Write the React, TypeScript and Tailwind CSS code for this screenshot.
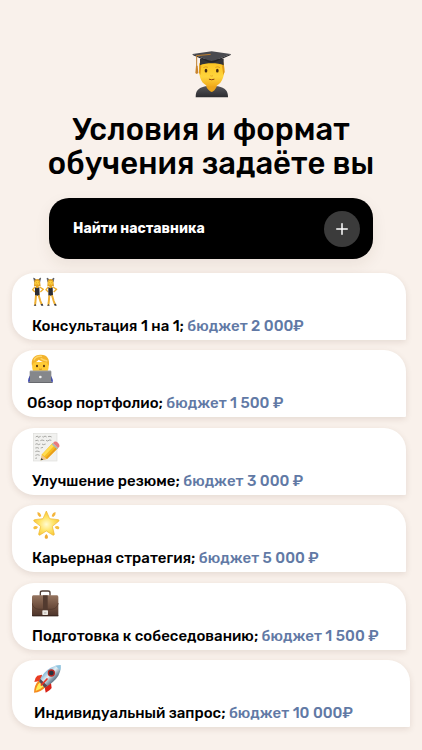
import React from "react";
import { Plus } from "lucide-react";
import clsx from "clsx";

function GraduateIcon() {
  return (
    <svg viewBox="30 32 126 144" className="h-12 w-[42px]" aria-hidden="true">
      <defs>
        <linearGradient id="grad-face" x1="0" y1="0" x2="0" y2="1">
          <stop offset="0" stopColor="#fbc21f" />
          <stop offset="0.6" stopColor="#ffd53d" />
          <stop offset="1" stopColor="#f0a818" />
        </linearGradient>
        <linearGradient id="grad-gown" x1="0" y1="0" x2="0" y2="1">
          <stop offset="0" stopColor="#55555a" />
          <stop offset="1" stopColor="#2c2c30" />
        </linearGradient>
      </defs>
      <path d="M47 174 C47 154 54 147 76 141 H114 C136 147 144 154 144 174 Z" fill="url(#grad-gown)" />
      <path d="M79 128 H110 V142 C106 151 99 157 95 158 C89 156 82 149 79 142 Z" fill="#eba51c" />
      <path d="M60 68 C54 94 58 124 73 134 C86 145 104 145 117 134 C131 124 137 94 130 68 Z" fill="url(#grad-face)" />
      <path d="M58 70 L57 100 L61 107 L64 80 Z M131 70 L134 98 L130 107 L126 80 Z" fill="#e09a17" />
      <path d="M60 58 H131 V78 C112 70 79 70 60 78 Z" fill="#333337" />
      <path d="M38 44 L95 36 L152 44 L106 63 C98 66 91 66 84 63 Z" fill="#4a4a4f" />
      <path d="M38 44 L84 63 C91 66 98 66 106 63 L152 44 V47 L106 67 C98 70 91 70 84 67 L38 47 Z" fill="#242428" />
      <path d="M92 45 L50 49 V83" fill="none" stroke="#bd7e2e" strokeWidth="3" />
      <path d="M48 79 H53 L55 101 L50 104 L46 101 Z" fill="#c8842e" />
      <ellipse cx="78" cy="94" rx="4" ry="5.5" fill="#482c12" />
      <ellipse cx="112" cy="94" rx="4" ry="5.5" fill="#482c12" />
      <path d="M70 85 Q77 80 84 84 M106 84 Q113 80 120 85" fill="none" stroke="#d18c18" strokeWidth="2" />
      <path d="M91 109 Q95 112 99 109" fill="none" stroke="#dd981c" strokeWidth="2" />
      <path d="M88 120 Q95 123 102 120" fill="none" stroke="#8b3f0c" strokeWidth="3" strokeLinecap="round" />
    </svg>
  );
}

function Dancer() {
  return (
    <g>
      <path d="M32 22 L29 9 L36 14 M43 14 L50 9 L47 22" fill="#55565e" stroke="#494a52" strokeWidth="2" />
      <path d="M31 19 C31 10 48 10 48 19 L50 34 H30 Z" fill="#e0a024" />
      <circle cx="39.500" cy="24" r="7" fill="#ffd03b" />
      <path d="M33 36 L26 44 L33 51 M47 36 L58 43 L49 51" fill="none" stroke="#f0b02c" strokeWidth="4" strokeLinejoin="round" />
      <path d="M36 30 H44 V39 H36 Z" fill="#e9a824" />
      <path d="M33 37 L39 40 L46 37 L47 62 H33 Z" fill="#2c2c31" />
      <path d="M36 61 L34 84 L33 91 M44 61 L49 78 L53 88" fill="none" stroke="#efb032" strokeWidth="6" />
      <path d="M29 92 L34 87 L37 92 Z M50 88 L56 86 L58 92 H52 Z" fill="#39393f" />
      <path d="M36 23 H37 M42 23 H43" stroke="#69400d" strokeWidth="2" />
      <path d="M37 28 H42" stroke="#b35b17" strokeWidth="1" />
    </g>
  );
}

function DancersIcon() {
  return (
    <svg viewBox="24 6 90 90" className="size-[30px]" aria-hidden="true">
      <Dancer />
      <g transform="translate(40 0)">
        <Dancer />
      </g>
    </svg>
  );
}

function LaptopIcon() {
  return (
    <svg viewBox="21 6 90 90" className="size-[30px]" aria-hidden="true">
      <path d="M24 89 C25 75 30 66 41 62 H82 C93 67 98 77 99 89 Z" fill="#2936ae" />
      <path d="M37 30 C34 57 42 70 61 71 C80 70 88 57 86 30 Z" fill="#ffcb35" />
      <path d="M36 42 C32 20 43 8 61 8 C81 7 91 21 86 42 C83 37 81 34 80 31 C71 31 62 28 56 23 C52 29 44 31 41 32 Z" fill="#f2b32c" />
      <path d="M42 25 C45 15 56 12 66 13 M62 19 C69 24 76 26 82 27" fill="none" stroke="#ffd566" strokeWidth="4" />
      <ellipse cx="51" cy="42" rx="3" ry="4" fill="#54340f" />
      <ellipse cx="72" cy="42" rx="3" ry="4" fill="#54340f" />
      <path d="M57 51 Q61 53 66 51" fill="none" stroke="#b8701a" strokeWidth="2" />
      <rect x="29" y="56" width="65" height="36" rx="3" fill="#85878b" />
      <path d="M30 57 H93" stroke="#a9abad" strokeWidth="2" />
      <path d="M25 90 H98 V93 H25 Z" fill="#67696e" />
      <circle cx="61" cy="75" r="4" fill="#f0f1f2" />
    </svg>
  );
}

function NoteIcon() {
  return (
    <svg viewBox="24 6 90 90" className="size-[30px]" aria-hidden="true">
      <rect x="28" y="10" width="71" height="83" fill="#f1f1ef" stroke="#dededb" strokeWidth="2" />
      <g fill="none" stroke="#83837f" strokeWidth="2">
        <path d="M35 21 l5 -3 l3 4 l7 -3 M55 20 l4 1 l4 -3 l5 3 M72 20 l6 -1 l5 2" />
        <path d="M34 32 l7 -1 l3 2 M49 32 l5 -2 l7 2 M66 31 l4 2 l7 -3 l5 1" />
        <path d="M34 43 l5 -2 l4 3 l6 -2 M54 42 l4 2 l7 -2" />
        <path d="M34 54 l6 -1 l5 2 M50 54 l7 -2 M34 65 l5 -2 l8 2 M34 76 l7 -2 l6 2 M34 85 l5 -1" />
      </g>
      <path d="M50 91 L54 73 L86 39 L102 54 L69 87 Z" fill="#f7bd20" />
      <path d="M55 73 L86 40 L92 46 L61 79 Z" fill="#ffdd52" />
      <path d="M65 84 L97 50 L102 54 L69 87 Z" fill="#e89d1a" />
      <path d="M50 91 L54 75 L68 87 Z" fill="#edc591" />
      <path d="M50 91 L52 84 L58 89 Z" fill="#45403a" />
      <path d="M83 43 L87 39 L103 54 L99 58 Z" fill="#a9b8bd" />
      <path d="M87 39 L91 35 C98 32 108 42 106 49 L103 54 Z" fill="#e9797c" />
    </svg>
  );
}

function StarIcon() {
  return (
    <svg viewBox="24 3 90 90" className="size-[30px]" aria-hidden="true">
      <defs>
        <radialGradient id="star-fill" cx="0.500" cy="0.550" r="0.550">
          <stop offset="0" stopColor="#fffbd2" />
          <stop offset="0.5" stopColor="#ffe56a" />
          <stop offset="1" stopColor="#f8c332" />
        </radialGradient>
      </defs>
      <path d="M67 9 L77 32 L103 35 Q107 36 104 40 L85 55 L91 79 Q90 83 86 81 L67 69 L48 81 Q44 83 44 78 L50 55 L30 40 Q27 36 32 35 L57 32 Z" fill="url(#star-fill)" stroke="#efb52b" strokeWidth="2" strokeLinejoin="round" />
      <path d="M40 13 Q49 12 52 25 L47 27 Q39 22 40 13 Z M95 13 Q86 12 83 25 L88 27 Q96 22 95 13 Z" fill="#f4b53b" />
      <path d="M67 78 Q74 85 71 91 Q67 94 63 91 Q60 85 67 78 Z" fill="#efab34" />
      <path d="M28 58 Q34 50 42 57 Q38 66 29 63 Z M106 58 Q100 50 92 57 Q96 66 105 63 Z" fill="#f5bd3e" />
    </svg>
  );
}

function BriefcaseIcon() {
  return (
    <svg viewBox="24 6 90 90" className="size-[30px]" aria-hidden="true">
      <defs>
        <linearGradient id="case-fill" x1="0" y1="0" x2="0" y2="1">
          <stop offset="0" stopColor="#95745f" />
          <stop offset="0.5" stopColor="#70503f" />
          <stop offset="1" stopColor="#4b332a" />
        </linearGradient>
      </defs>
      <path d="M49 32 V23 Q49 18 55 18 H72 Q78 18 78 23 V32" fill="none" stroke="#513f37" strokeWidth="4" />
      <path d="M28 31 H99 Q103 31 103 36 V92 Q103 94 100 94 H27 Q24 94 24 91 V36 Q24 31 28 31 Z" fill="url(#case-fill)" />
      <path d="M24 54 Q27 71 44 73 H83 Q100 71 103 54" fill="none" stroke="#4f362b" strokeWidth="2" />
      <path d="M24 92 H103" stroke="#3b2821" strokeWidth="3" />
      <path d="M57 31 H71 V78 H57 Z" fill="#523a2f" />
      <rect x="55" y="76" width="17" height="14" rx="2" fill="#ece8e2" />
      <path d="M60 81 H67 V86 H60 Z" fill="#c9c5bf" />
    </svg>
  );
}

function RocketIcon() {
  return (
    <svg viewBox="30 6 90 90" className="size-[30px]" aria-hidden="true">
      <defs>
        <linearGradient id="rocket-body" x1="0.200" y1="0.200" x2="0.800" y2="0.800">
          <stop offset="0" stopColor="#4f9bc7" />
          <stop offset="0.45" stopColor="#e4eff5" />
          <stop offset="0.7" stopColor="#8298a8" />
          <stop offset="1" stopColor="#344452" />
        </linearGradient>
      </defs>
      <path d="M54 38 L40 41 Q32 47 31 60 L52 56 Z" fill="#e93c23" />
      <path d="M81 62 L83 78 Q78 86 65 92 L61 69 Z" fill="#d82118" />
      <path d="M44 56 Q31 67 30 92 Q51 91 65 74 Z" fill="#f58b1e" />
      <path d="M47 62 Q38 70 35 87 Q49 83 59 73 Z" fill="#ffed55" />
      <path d="M45 58 Q57 30 80 17 Q94 9 110 9 Q111 27 103 41 Q91 60 62 77 Z" fill="url(#rocket-body)" />
      <path d="M94 11 Q103 9 110 9 Q111 17 109 25 Z" fill="#8fc5e1" />
      <path d="M45 58 L49 51 L70 71 L62 77 Z" fill="#5c4650" />
      <circle cx="82" cy="33" r="11" fill="#b72723" />
      <circle cx="82" cy="33" r="7" fill="#27333e" />
      <path d="M52 69 L69 51" stroke="#e93424" strokeWidth="5" strokeLinecap="round" />
    </svg>
  );
}

const requests = [
  { title: "Консультация 1 на 1;", budget: "бюджет 2 000₽", icon: DancersIcon, className: "mr-4 pl-5" },
  { title: "Обзор портфолио;", budget: "бюджет 1 500 ₽", icon: LaptopIcon, className: "mr-4 pl-[15px]" },
  { title: "Улучшение резюме;", budget: "бюджет 3 000 ₽", icon: NoteIcon, className: "mr-4 pl-5" },
  { title: "Карьерная стратегия;", budget: "бюджет 5 000 ₽", icon: StarIcon, className: "mr-4 pl-5" },
  { title: "Подготовка к собеседованию;", budget: "бюджет 1 500 ₽", icon: BriefcaseIcon, className: "mr-4 pl-5" },
  { title: "Индивидуальный запрос;", budget: "бюджет 10 000₽", icon: RocketIcon, className: "mr-3 pl-[22px]" },
];

export default function App() {
  return (
    <main className="flex min-h-screen flex-col bg-[#f9f1eb] pt-[50px] pb-[23px] font-['Rubik','Roboto',sans-serif] text-black">
      {/* Header */}
      <header className="flex flex-col items-center px-[49px]">
        <GraduateIcon />
        <h1 className="mt-[15px] text-center text-[31px] leading-[34px] font-medium whitespace-nowrap">
          Условия и формат
          <br />
          обучения задаёте вы
        </h1>
        <button
          type="button"
          className="mt-[17px] flex h-[61px] w-full items-center justify-between rounded-[20px] bg-black pr-[13px] pl-6 text-[14px] font-bold text-white shadow-[0_6px_16px_rgba(80,50,30,0.08)]"
        >
          Найти наставника
          <span className="flex size-9 items-center justify-center rounded-full bg-[#3b3b3b]">
            <Plus className="size-[18px]" strokeWidth={2} />
          </span>
        </button>
      </header>

      {/* Requests */}
      <ul className="mt-[14px] flex flex-1 flex-col justify-between gap-2 pl-3">
        {requests.map(({ title, budget, icon: Icon, className }) => (
          <li
            key={title}
            className={clsx(
              "rounded-[22px] rounded-br-[1px] bg-white pt-1 pb-1 shadow-[0_2px_6px_rgba(80,50,30,0.12)]",
              className
            )}
          >
            <Icon />
            <p className="mt-[9px] text-[15px] leading-5 font-medium whitespace-nowrap">
              {title} <span className="text-[#6179a5]">{budget}</span>
            </p>
          </li>
        ))}
      </ul>
    </main>
  );
}
